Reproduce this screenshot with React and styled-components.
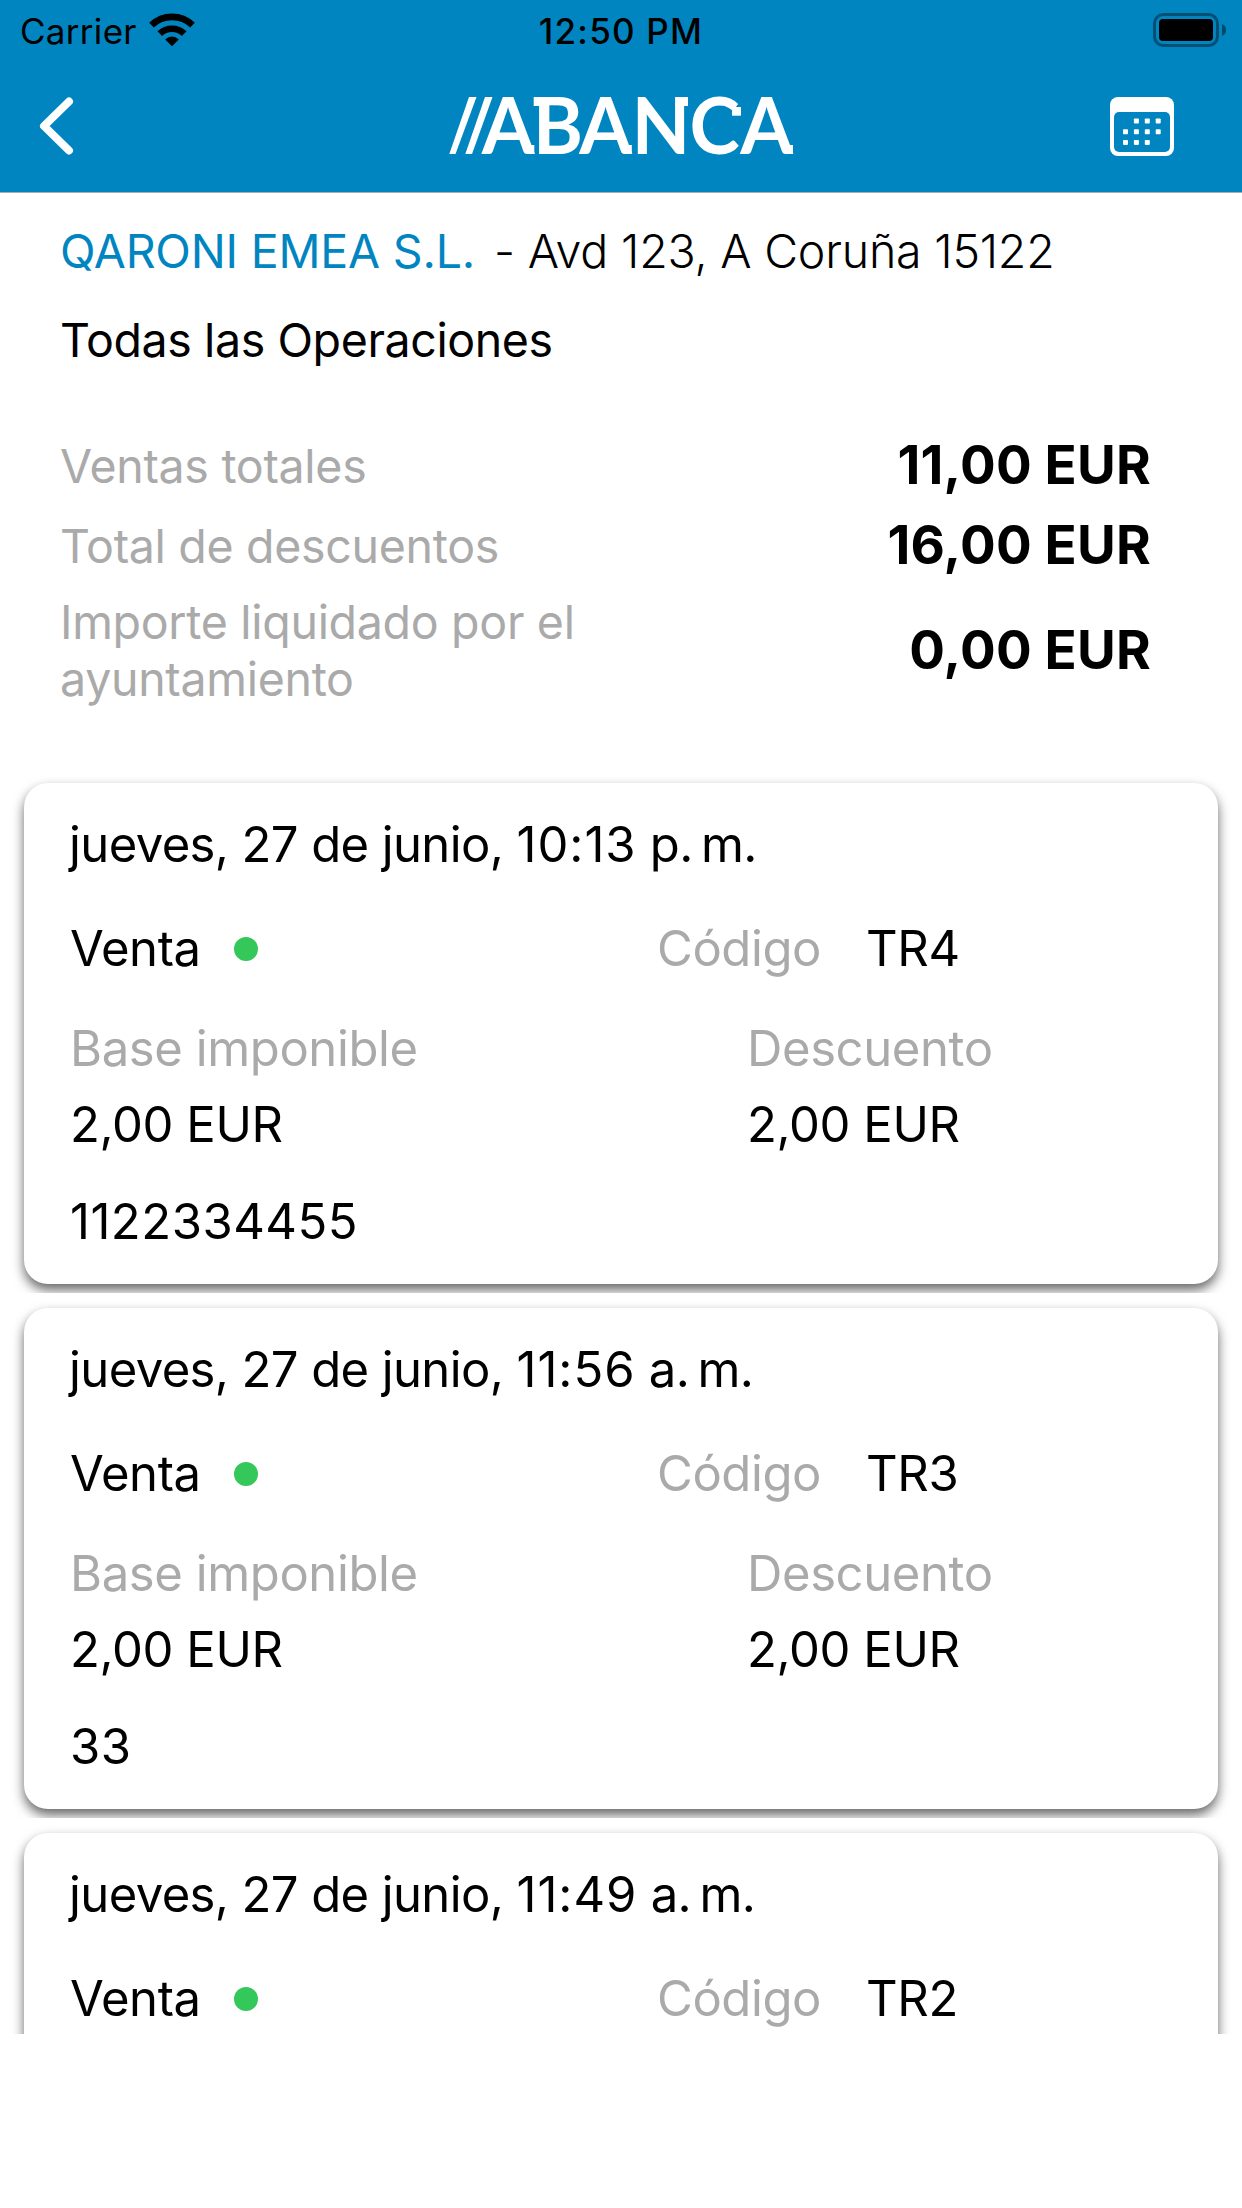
import styled, { createGlobalStyle } from "styled-components"

const GlobalStyle = createGlobalStyle`
	* {
		box-sizing: border-box;
	}
	body {
		margin: 0;
		background-color: #fff;
		color: #000;
		font-family: Inter, "Liberation Sans", sans-serif;
	}
	p, h1, h2 {
		margin: 0;
		font-weight: 400;
	}
`

const Screen = styled.div`
	width: 1242px;
	height: 2208px;
	overflow: hidden;
	background-color: #fff;
`

const Header = styled.header`
	height: 193px;
	background-color: #0085c1;
	border-bottom: 1px solid #a9adb0;
`

const StatusBar = styled.div`
	display: grid;
	grid-template-columns: 1fr auto 1fr;
	align-items: center;
	height: 62px;
	padding: 0 15px;
	font-size: 35px;
	line-height: 42px;
`

const Carrier = styled.div`
	display: flex;
	align-items: center;
	gap: 12px;
	margin-left: 5px;
	letter-spacing: 0.3px;

	svg {
		margin-bottom: 3px;
	}
`

const Time = styled.p`
	font-weight: 550;
	letter-spacing: 1.2px;
`

const Battery = styled.div`
	display: flex;
	align-items: center;
	justify-content: flex-end;
	margin-bottom: 2px;
`

const NavBar = styled.nav`
	display: grid;
	grid-template-columns: 1fr auto 1fr;
	align-items: center;
	height: 129px;
	padding: 0 38px;
`

const IconButton = styled.button`
	display: flex;
	padding: 0;
	border: 0;
	margin-bottom: 1px;
	background: none;

	&:last-of-type {
		justify-self: end;
		margin: 0 30px 0 0;
	}
`

const LogoSvg = styled.svg`
	margin-bottom: 2px;
	overflow: visible;
`

const LogoText = styled.text`
	font-family: Lato, sans-serif;
	font-size: 79px;
	font-weight: 700;
`

const Summary = styled.section`
	height: 575px;
	padding: 29px 91px 0 60px;
	font-size: 46.5px;
	line-height: 58px;
	letter-spacing: -0.3px;
`

const Company = styled.h1`
	display: flex;
	gap: 19px;
	font-size: 46.5px;
	color: #0085c1;
	letter-spacing: -0.2px;
	white-space: nowrap;
`

const Address = styled.span`
	color: #000;
	font-weight: 300;
`

const Title = styled.h2`
	margin: 31px 0 57px;
	font-size: 46.5px;
	letter-spacing: -0.4px;
`

const Total = styled.div`
	display: flex;
	align-items: center;
	justify-content: space-between;
	height: ${(props) => (props.$tall ? "129px" : "80px")};
`

const TotalLabel = styled.p`
	width: 560px;
	line-height: 57px;
	color: #aaa;
`

const Amount = styled.p`
	font-size: 53px;
	font-weight: 700;
	letter-spacing: 0.2px;
	margin-bottom: 2px;
`

const List = styled.section`
	height: 1266px;
	overflow: hidden;
`

const Cell = styled.div`
	height: 525px;
	padding: 15px 24px 9px;
	overflow: hidden;
`

const Card = styled.article`
	height: 501px;
	padding: 32px 46px 0;
	border-radius: 24px;
	background-color: #fff;
	box-shadow: 0 6px 12px rgba(0, 0, 0, 0.6);
	font-size: 49px;
	line-height: 60px;
	letter-spacing: -0.4px;
	white-space: nowrap;
`

const DateText = styled.p`
	margin: 0 0 44px -1px;
	letter-spacing: -0.6px;
`

const Hour = styled.span`
	letter-spacing: 1px;
`

const Row = styled.div`
	display: grid;
	grid-template-columns: ${(props) => props.$left} 1fr;
	margin-bottom: ${(props) => props.$gap};
`

const Kind = styled.div`
	display: flex;
	align-items: center;
	gap: 33px;
`

const Dot = styled.span`
	width: 24px;
	height: 24px;
	margin-bottom: 1px;
	border-radius: 50%;
	background-color: #34c759;
`

const Code = styled.div`
	display: flex;
	gap: 45px;
`

const Label = styled.p`
	color: #aaa;
`

const Value = styled.p`
	color: #000;
`

const Reference = styled.p`
	letter-spacing: 0.5px;
`

const WifiIcon = () => (
	<svg width="46" height="34" viewBox="0 0 46 34">
		<g fill="none" stroke="#000" strokeWidth="6.6">
			<path d="M2.5 12.2A29.5 29.5 0 0 1 43.5 12.2" />
			<path d="M10.8 20.7A17.5 17.5 0 0 1 35.2 20.7" />
		</g>
		<path d="M23 33.2L16.2 26.4A9.6 9.6 0 0 1 29.8 26.4Z" />
	</svg>
)

const BatteryIcon = () => (
	<svg width="74" height="34" viewBox="0 0 74 34">
		<rect
			x="1.5"
			y="1.5"
			width="63"
			height="31"
			rx="9"
			fill="none"
			stroke="#005075"
			strokeWidth="3"
		/>
		<rect x="6" y="6" width="54" height="22" rx="4" />
		<path d="M69 11C74.3 12.5 74.3 21.5 69 23Z" fill="#004a6c" />
	</svg>
)

const BackIcon = () => (
	<svg width="38" height="60" viewBox="0 0 38 60">
		<path
			d="M31 5.5L6 30L31 54.5"
			fill="none"
			stroke="#fff"
			strokeWidth="8"
			strokeLinecap="round"
			strokeLinejoin="round"
		/>
	</svg>
)

const dots = [
	[1, 0], [2, 0], [3, 0],
	[0, 1], [1, 1], [2, 1], [3, 1],
	[0, 2], [1, 2], [2, 2],
]

const CalendarIcon = () => (
	<svg width="64" height="59" viewBox="0 0 64 59">
		<rect width="64" height="59" rx="8" fill="#fff" />
		<rect x="4" y="15" width="56" height="40" rx="5" fill="#0085c1" />
		{dots.map(([x, y]) => (
			<rect
				key={`${x}-${y}`}
				x={13 + x * 10.9}
				y={21.5 + y * 10.7}
				width="5"
				height="5"
				rx="0.8"
				fill="#fff"
			/>
		))}
	</svg>
)

const Logo = () => (
	<LogoSvg width="344" height="62" viewBox="0 0 344 62" fill="#fff">
		<path d="M20 2H27.5L6.5 59H0.3Z" />
		<path d="M36 2H43.5L23 59H16.3Z" />
		<LogoText
			x="34 87.5 135.7 190.3 250.5 303.4"
			y="59"
			transform="scale(0.96 1)"
		>
			ABANCA
		</LogoText>
		{/* small serifs of the wordmark */}
		<rect x="79" y="50" width="6.3" height="9" />
		<rect x="84.7" y="2" width="9" height="9" />
		<rect x="176.5" y="50" width="6.3" height="9" />
		<rect x="231" y="2" width="8" height="9" />
		<rect x="283" y="12" width="9" height="8.7" />
		<rect x="337.7" y="50" width="6.3" height="9" />
	</LogoSvg>
)

const totals = [
	{ label: "Ventas totales", amount: "11,00 EUR" },
	{ label: "Total de descuentos", amount: "16,00 EUR" },
	{
		label: "Importe liquidado por el ayuntamiento",
		amount: "0,00 EUR",
		tall: true,
	},
]

const operations = [
	{
		day: "jueves, 27 de junio,",
		hour: "10:13",
		period: "p.\u2009m.",
		code: "TR4",
		reference: "1122334455",
	},
	{
		day: "jueves, 27 de junio,",
		hour: "11:56",
		period: "a.\u2009m.",
		code: "TR3",
		reference: "33",
	},
	{
		day: "jueves, 27 de junio,",
		hour: "11:49",
		period: "a.\u2009m.",
		code: "TR2",
	},
]

const Operation = (props) => (
	<Cell>
		<Card>
			<DateText>
				{props.day} <Hour>{props.hour}</Hour> {props.period}
			</DateText>
			<Row $left="587px" $gap="40px">
				<Kind>
					<Value>Venta</Value>
					<Dot />
				</Kind>
				<Code>
					<Label>Código</Label>
					<Value>{props.code}</Value>
				</Code>
			</Row>
			{props.reference && (
				<>
					<Row $left="677px" $gap="16px">
						<Label>Base imponible</Label>
						<Label>Descuento</Label>
					</Row>
					<Row $left="677px" $gap="37px">
						<Value>2,00 EUR</Value>
						<Value>2,00 EUR</Value>
					</Row>
					<Reference>{props.reference}</Reference>
				</>
			)}
		</Card>
	</Cell>
)

const App = () => {
	return (
		<Screen>
			<GlobalStyle />
			<Header>
				<StatusBar>
					<Carrier>
						Carrier
						<WifiIcon />
					</Carrier>
					<Time>12:50 PM</Time>
					<Battery>
						<BatteryIcon />
					</Battery>
				</StatusBar>
				<NavBar>
					<IconButton aria-label="Volver">
						<BackIcon />
					</IconButton>
					<Logo />
					<IconButton aria-label="Calendario">
						<CalendarIcon />
					</IconButton>
				</NavBar>
			</Header>
			<Summary>
				<Company>
					QARONI EMEA S.L.
					<Address>- Avd 123, A Coruña 15122</Address>
				</Company>
				<Title>Todas las Operaciones</Title>
				{totals.map((total) => (
					<Total key={total.label} $tall={total.tall}>
						<TotalLabel>{total.label}</TotalLabel>
						<Amount>{total.amount}</Amount>
					</Total>
				))}
			</Summary>
			<List>
				{operations.map((operation) => (
					<Operation key={operation.code} {...operation} />
				))}
			</List>
		</Screen>
	)
}

export default App
